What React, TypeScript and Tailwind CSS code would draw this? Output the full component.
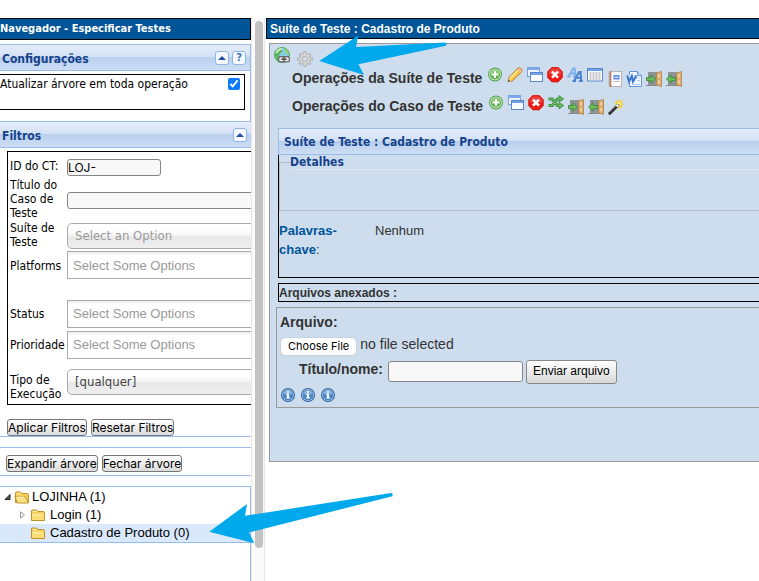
import type { ReactNode } from "react";

type PathProps = { children: ReactNode };

function Icon({ children }: PathProps) {
  return (
    <svg viewBox="0 0 16 16" className="block size-4 shrink-0" aria-hidden="true">
      {children}
    </svg>
  );
}

function AddIcon() {
  return (
    <Icon>
      <circle cx="8" cy="7.5" r="6.9" fill="#4d9e46" />
      <circle cx="8" cy="7.5" r="6" fill="#cfeac4" />
      <circle cx="8" cy="7.5" r="5.1" fill="#62b455" />
      <path d="M3.5 6.5a4.6 4.6 0 0 1 9 0Q8 8 3.5 6.5Z" fill="#8acb7c" />
      <path d="M7 4h2v2.500h2.500v2H9V11H7V8.500H4.500v-2H7Z" fill="#fff" />
    </Icon>
  );
}

function PencilIcon() {
  return (
    <Icon>
      <path d="M1 14.500 2 10.300 11.200 1Q12.500.2 14.200 1.700 15.700 3.400 14.800 4.700L5.200 14Z" fill="#fbc845" stroke="#b9751b" strokeWidth="1" />
      <path d="m3.300 10.700 8-7.700" stroke="#fff0a8" strokeWidth="1.500" />
      <path d="m10.500 2.200 3.300 3.300 1-1q.6-1.200-.8-2.600T11.300 1.400Z" fill="#f2b49a" />
      <path d="M1 14.600 2 11l2.700 2.600Z" fill="#f4dcae" />
      <path d="m1 14.600.5-2 1.500 1.500Z" fill="#333" />
    </Icon>
  );
}

function CopyIcon() {
  return (
    <Icon>
      <rect x=".5" y=".5" width="12" height="9" fill="#edf3fb" stroke="#7aa4de" />
      <rect x="1" y="1" width="11" height="2" fill="#7ba8ea" />
      <rect x="3.500" y="5.500" width="12" height="9" fill="#f7faff" stroke="#5b87c7" />
      <rect x="4" y="6" width="11" height="2" fill="#6fa1ea" />
    </Icon>
  );
}

function DeleteIcon() {
  return (
    <Icon>
      <path d="M4.800.5h6.400l4.100 4.100v6.200l-4.100 4.100H4.800L.7 10.800V4.600Z" fill="#ec1c16" stroke="#d5120d" strokeWidth=".8" />
      <path d="M5 1.500h6l3.200 3.200v2.800H1.800V4.700Z" fill="#f4635a" opacity=".5" />
      <path d="m5 4.700 6 6M11 4.700l-6 6" stroke="#fff" strokeWidth="2.600" />
    </Icon>
  );
}

function FontSortIcon() {
  return (
    <Icon>
      <path d="M1.500 9.500 6.300 1.500h1.500l.5 8M3.500 6.500h4.500M.3 9.500h3M6 9.500h3.300" fill="none" stroke="#7db0ea" strokeWidth="1.900" />
      <path d="m7 14 5-9h1.500l.8 9M9 10.800h5M5.500 14h3.500M12 14h3.800" fill="none" stroke="#4a83d2" strokeWidth="2.100" />
    </Icon>
  );
}

function TableIcon() {
  return (
    <Icon>
      <rect x=".5" y="1.500" width="15" height="12.500" fill="#fbfcfe" stroke="#5b87c7" />
      <rect x="1" y="2" width="14" height="2" fill="#6fa1ea" />
      <path d="M2.500 6h11M2.500 8h11M2.500 10h11M2.500 12h11" stroke="#9a9a9a" strokeDasharray="2 1" />
    </Icon>
  );
}

function NotebookIcon() {
  return (
    <Icon>
      <rect x="2.500" y=".5" width="12" height="15" fill="#fafafa" stroke="#b5b5b5" />
      <path d="M3.500.5v15" stroke="#a9654a" strokeWidth="1.500" />
      <path d="M1 2.500h3M1 5h3M1 7.500h3M1 10h3M1 12.500h3" stroke="#c9a898" />
      <rect x="6.500" y="4" width="6" height="4.500" fill="#5c8ede" />
      <path d="M7.500 6.200h4" stroke="#fff" />
      <path d="M6.500 10.500h6" stroke="#bbb" />
    </Icon>
  );
}

function WordIcon() {
  return (
    <Icon>
      <path d="M3.500.5h8l4 4v11h-12Z" fill="#f3f8ff" stroke="#5e94d8" />
      <path d="M11.500.5v4h4" fill="#c7ddf7" stroke="#5e94d8" />
      <path d="M11 7h3M11 9.500h3M6 13.500h8" stroke="#a9c7ec" />
      <path d="M0 4h11.500L9 11.500H1.500Z" fill="#dbe9fb" />
      <path d="M1.200 4.500 3 10.500 5.800 5l1.200 5.500 3.500-6" fill="none" stroke="#3c78d0" strokeWidth="2.100" />
    </Icon>
  );
}

function DoorIcon({ leaving = false }: { leaving?: boolean }) {
  return (
    <Icon>
      <path d="M2 1h9v13H2Z" fill="#8d9496" />
      <path d="M0 14.500h12" stroke="#8a8a8a" strokeWidth="1" />
      <path d="M10.500 2 15.500.5v15l-5-1.500Z" fill="#dcae72" stroke="#b58145" strokeWidth=".8" />
      <path d="M12 3.500 14 2.900v3.400l-2 .3ZM12 9l2 .2v3.500l-2-.6Z" fill="#efcf9c" />
      {leaving ? (
        <path d="M.5 8 5 4v2.500h4.500v3.200H5v2.500Z" fill="#6cbd5c" stroke="#35852f" strokeWidth=".8" />
      ) : (
        <path d="M9.500 8 5 4v2.500H.5v3.200H5v2.500Z" fill="#6cbd5c" stroke="#35852f" strokeWidth=".8" />
      )}
    </Icon>
  );
}

function ShuffleIcon() {
  return (
    <Icon>
      <path d="M.5 4h3.700l5.300 6.500H12M.5 10.500h3.700L9.500 4H12" fill="none" stroke="#3f8f42" strokeWidth="3.200" />
      <path d="M11 .6 15.700 4 11 7.200ZM11 7.300l4.700 3.200-4.700 3.400Z" fill="#5fb45c" stroke="#3f8f42" strokeWidth=".8" />
      <path d="M1 4h3.300l5.200 6.500H12M1 10.500h3.300L9.500 4H12" fill="none" stroke="#74c16e" strokeWidth="1.200" />
    </Icon>
  );
}

function WandIcon() {
  return (
    <Icon>
      <path d="m10.500 0 1 2.300L14.500 1l-1 2.700L16 5.200l-2.500 1.100 1 3L12 8.200l-1.200 2.500L9.500 8.200 7 8.700l1-2.700L6 4.500l2.500-.8L7.500 1l2.500 1.200Z" fill="#f8c930" />
      <circle cx="11" cy="5" r="2" fill="#fff0a0" />
      <path d="m1.800 14.300 8-8" stroke="#2b2b2b" strokeWidth="3" strokeLinecap="round" />
      <path d="m1.500 13.200 7-7" stroke="#9a9a9a" strokeWidth=".9" />
      <path d="m8.500 7.500 1.800-1.800" stroke="#eee" strokeWidth="2.600" />
    </Icon>
  );
}

function WorldLinkIcon() {
  return (
    <Icon>
      <circle cx="8" cy="8" r="7.500" fill="#86cdea" stroke="#4fa553" />
      <path d="M1 8Q1 2 7 1l1.500 3L5 8l3 3-2 4Q1.500 13 1 8Z" fill="#5db85c" />
      <path d="M10 1.200q5 2 5 6.800l-3-1-1.500-3Z" fill="#8ed27a" />
      <path d="M2.500 6Q4 2 8 2" fill="none" stroke="#e3f8d6" strokeWidth="1.500" />
      <rect x="4" y="9" width="12" height="6.500" rx="2.500" fill="#6b6b6b" />
      <rect x="5.200" y="10.200" width="4.300" height="4" rx="1.500" fill="#e6e6e6" />
      <rect x="10.500" y="10.200" width="4.300" height="4" rx="1.500" fill="#e6e6e6" />
      <path d="M7.500 12.200h5" stroke="#4a4a4a" strokeWidth="1.500" />
    </Icon>
  );
}

function GearIcon() {
  return (
    <Icon>
      <g stroke="#a2a2a2" strokeWidth="3">
        <path d="M8 .3v15.400M.3 8h15.400M2.700 2.700l10.600 10.600M13.300 2.700 2.700 13.300" />
      </g>
      <circle cx="8" cy="8" r="5.700" fill="#a2a2a2" />
      <g stroke="#d6d6d6" strokeWidth="1.700">
        <path d="M8 1v14M1 8h14M3.200 3.200l9.600 9.600M12.800 3.200l-9.600 9.600" />
      </g>
      <circle cx="8" cy="8" r="5" fill="#d6d6d6" />
      <circle cx="8" cy="8" r="3" fill="#b4b4b4" />
      <circle cx="8" cy="8" r="2.100" fill="#cddded" />
    </Icon>
  );
}

function InfoIcon() {
  return (
    <Icon>
      <circle cx="8" cy="8" r="7" fill="#35619f" />
      <circle cx="8" cy="8" r="6" fill="#a9c8ea" />
      <circle cx="8" cy="8" r="5.300" fill="#4b86c8" />
      <path d="M3.500 7a4.600 4.600 0 0 1 9 0Q8 8.500 3.500 7Z" fill="#83b0df" />
      <path d="M7 4h2v1.700H7ZM6.300 6.700H9v3.500h.9v1.300H6.200v-1.300H7V8h-.7Z" fill="#fff" />
    </Icon>
  );
}

function FolderIcon({ open = false }: { open?: boolean }) {
  return (
    <Icon>
      <path d="M1.500 13.500V4q0-1 1-1h4l1.500 1.500h5.500q1 0 1 1v8Z" fill="#f5cf5a" stroke="#c0902a" />
      {open ? (
        <path d="M.8 7.500h10.400l3.300 6.500H3.500Z" fill="#fbe287" stroke="#c0902a" />
      ) : (
        <path d="M2 6.500h12V13H2Z" fill="#fbdd78" />
      )}
      <path d="M3 4.500h3.500M2.500 8h8" stroke="#fff3ba" />
    </Icon>
  );
}

const toolButton =
  "flex size-[14px] items-center justify-center rounded-[3px] border border-[#8fb5e8] bg-[#f5f9ff] text-[11px] leading-none font-bold text-[#3a72b5]";

function CollapseButton({ label }: { label: string }) {
  return (
    <button type="button" aria-label={label} className={toolButton}>
      <svg viewBox="0 0 8 4" className="h-1 w-2" aria-hidden="true">
        <path d="M0 4 4 0l4 4Z" fill="#1e4ea5" />
      </svg>
    </button>
  );
}

const barGradient =
  "bg-[linear-gradient(#e4edf9_0,#d3e1f4_48%,#b9cfee_50%,#cddef5_100%)] font-['DejaVu_Sans_Condensed',sans-serif] text-[12px] font-bold text-[#15428b]";

function SectionBar({ title, children }: { title: string; children: ReactNode }) {
  return (
    <div className={"flex h-[27px] items-center border-y border-[#99bbe8] pr-1 pl-0.5 " + barGradient}>
      <h2 className="flex-1 pt-0.5">{title}</h2>
      <div className="flex gap-[3px]">{children}</div>
    </div>
  );
}

const smallButton =
  "h-[17px] rounded-[3px] border border-[#777] bg-linear-to-b from-white to-[#dcdcdc] font-['Inter',sans-serif] text-[12px] leading-[15px] whitespace-nowrap text-black";
const textBox = "rounded-[3px] border border-[#858585] bg-[#f8f8f8] font-['Inter',sans-serif] text-[12px] text-black outline-none";
const multiSelect =
  "block h-7 w-[220px] border border-[#aaa] bg-linear-to-b from-[#eee] to-white to-15% px-[5px] font-['Liberation_Sans',Arial,sans-serif] text-[13px] outline-none placeholder:text-[#999]";
const singleSelect =
  "block h-[26px] w-[220px] appearance-none rounded-[5px] border border-[#aaa] bg-[linear-gradient(#fff_20%,#f4f4f4_50%,#e9e9e9_52%,#eee_100%)] px-[7px] text-[13px]";

function Navigator() {
  return (
    <aside className="flex w-[251px] shrink-0 flex-col overflow-hidden font-['DejaVu_Sans_Condensed',sans-serif] text-[12px] leading-[14px] text-black">
      <h1 className="h-[22px] border-y border-r border-black bg-[#005498] text-[11px] leading-[20px] font-bold text-white">
        Navegador - Especificar Testes
      </h1>

      <div className="mt-1 h-[77px] border-r border-[#99bbe8]">
        <SectionBar title="Configurações">
          <CollapseButton label="Recolher configurações" />
          <button type="button" aria-label="Ajuda" className={toolButton}>?</button>
        </SectionBar>
        <label className="mt-[3px] mr-[5px] flex h-9 justify-between border-y border-r border-black pt-[3px] pr-1">
          <span className="leading-[13px]">Atualizar árvore em toda operação</span>
          <input type="checkbox" defaultChecked className="size-3 accent-[#0a7aff]" />
        </label>
      </div>

      <div className="border-b border-[#99bbe8]">
        <SectionBar title="Filtros">
          <CollapseButton label="Recolher filtros" />
        </SectionBar>
        <form>
          <div className="mt-[3px] ml-[7px] w-[300px] border border-black pt-[3px]">
            <div className="flex h-6 items-center">
              <label htmlFor="ct" className="w-[59px] shrink-0 pb-[3px] pl-0.5">ID do CT:</label>
              <input id="ct" defaultValue="LOJ-" className={"h-[17px] w-[94px] " + textBox} />
            </div>
            <div className="flex h-[42px] items-center">
              <label htmlFor="titulo" className="w-[59px] shrink-0 pr-1 pb-[3px] pl-0.5">Título do Caso de Teste</label>
              <input id="titulo" className={"h-[17px] w-[220px] " + textBox} />
            </div>
            <div className="flex h-[30px] items-center">
              <label htmlFor="suite" className="w-[59px] shrink-0 pr-2 pb-[3px] pl-0.5">Suíte de Teste</label>
              <select id="suite" className={singleSelect + " text-[#999]"}>
                <option>Select an Option</option>
              </select>
            </div>
            <div className="flex h-[47px] items-start">
              <label htmlFor="plataformas" className="w-[59px] shrink-0 pt-2 pl-0.5">Platforms</label>
              <input id="plataformas" placeholder="Select Some Options" className={multiSelect} />
            </div>
            <div className="flex h-[31px] items-center">
              <label htmlFor="status" className="w-[59px] shrink-0 pl-0.5">Status</label>
              <input id="status" placeholder="Select Some Options" className={multiSelect} />
            </div>
            <div className="flex h-[31px] items-center">
              <label htmlFor="prioridade" className="w-[59px] shrink-0 pl-0.5">Prioridade</label>
              <input id="prioridade" placeholder="Select Some Options" className={multiSelect} />
            </div>
            <div className="flex h-11 items-end pb-[9px]">
              <label htmlFor="tipo" className="-mb-2 w-[59px] shrink-0 pr-2 pb-0.5 pl-0.5">Tipo de Execução</label>
              <select id="tipo" className={singleSelect + " text-[#444]"}>
                <option>[qualquer]</option>
              </select>
            </div>
          </div>
          <div className="flex gap-1 pt-[14px] pl-[7px]">
            <button type="button" className={smallButton}>Aplicar Filtros</button>
            <button type="button" className={smallButton}>Resetar Filtros</button>
          </div>
        </form>
      </div>

      <div className="mt-[10px] flex gap-1 border-y border-[#99bbe8] pt-[7px] pb-[3px] pl-[6px]">
        <button type="button" className={smallButton}>Expandir árvore</button>
        <button type="button" className={smallButton}>Fechar árvore</button>
      </div>

      <ul className="mt-[10px] flex-1 border-t border-r border-[#99bbe8] pt-px font-['Liberation_Sans',Arial,sans-serif] text-[13px] leading-[18px]">
        <li className="flex h-[18px] items-center pl-1">
          <svg viewBox="0 0 8 8" className="mr-[2px] size-2" aria-hidden="true">
            <path d="M1 6.500 6 1.500v5Z" fill="#555" stroke="#222" />
          </svg>
          <FolderIcon open />
          <span className="pl-0.5">LOJINHA (1)</span>
        </li>
        <li className="flex h-[18px] items-center pl-[19px]">
          <svg viewBox="0 0 8 8" className="mr-[3px] size-2" aria-hidden="true">
            <path d="M1.500.8 5.500 4l-4 3.200Z" fill="#fff" stroke="#999" />
          </svg>
          <FolderIcon />
          <span className="pl-1">Login (1)</span>
        </li>
        <li className="flex h-[19px] items-center border-b border-[#99bbe8] bg-[#d9e8fb] pl-[30px]">
          <FolderIcon />
          <span className="pl-1">Cadastro de Produto (0)</span>
        </li>
      </ul>
    </aside>
  );
}

function SuitePanel() {
  return (
    <main className="min-w-0 flex-1 font-['Liberation_Sans',Arial,sans-serif] text-[13px] text-[#333]">
      <h1 className="h-[21px] border-y border-l border-black bg-[#005498] pl-[3px] text-[12px] leading-[20px] font-bold text-white">
        Suíte de Teste : Cadastro de Produto
      </h1>
      <div className="mt-1 ml-[3px] h-[419px] border-y border-l border-[#999] bg-[#cddded] pt-[3px]">
        <div className="flex h-5 gap-[7px] pl-[4px]">
          <a href="#link" aria-label="Link direto"><WorldLinkIcon /></a>
          <button type="button" aria-label="Ações" className="pt-[3px]"><GearIcon /></button>
        </div>

        <div className="flex h-7 pl-[22px] text-[14px] leading-[22px] font-bold whitespace-nowrap">
          <h2 className="w-[195px] shrink-0">Operações da Suíte de Teste</h2>
          <div className="flex gap-1">
            <AddIcon />
            <PencilIcon />
            <CopyIcon />
            <DeleteIcon />
            <FontSortIcon />
            <TableIcon />
          </div>
          <div className="flex gap-[3px] pt-1 pl-1">
            <NotebookIcon />
            <WordIcon />
            <div className="flex gap-1 pl-px">
              <DoorIcon />
              <DoorIcon leaving />
            </div>
          </div>
        </div>
        <div className="flex h-[33px] pl-[22px] text-[14px] leading-[22px] font-bold whitespace-nowrap">
          <h2 className="w-[196px] shrink-0">Operações do Caso de Teste</h2>
          <div className="flex gap-1">
            <AddIcon />
            <CopyIcon />
            <DeleteIcon />
            <ShuffleIcon />
          </div>
          <div className="flex gap-1 pt-1 pl-1">
            <DoorIcon />
            <DoorIcon leaving />
            <WandIcon />
          </div>
        </div>

        <section className="ml-2">
          <h3 className={"h-[27px] border-y border-l border-[#99bbe8] pl-[5px] leading-[27px] " + barGradient}>
            Suíte de Teste : Cadastro de Produto
          </h3>
          <div className="h-[123px] border-b border-l border-black">
            <fieldset className="h-14 border-y border-l border-[#b5b8c8] pl-[10px]">
              <legend className="w-full border-b border-[#dde6ee] font-['DejaVu_Sans_Condensed',sans-serif] text-[12px] leading-[14px] font-bold text-[#15428b]">
                Detalhes
              </legend>
            </fieldset>
            <dl className="flex pt-[10px] leading-[19px]">
              <dt className="w-24 pr-4">
                <b className="text-[#005498]">Palavras-chave</b>:
              </dt>
              <dd>Nenhum</dd>
            </dl>
          </div>
        </section>

        <h3 className="mt-[5px] ml-2 h-[19px] border-y border-l border-black text-[12px] leading-[18px] font-bold">
          Arquivos anexados :
        </h3>

        <form className="mt-[5px] ml-[6px] h-[101px] border-y border-l border-[#999] pt-1 pl-[3px]">
          <h3 className="text-[14px] leading-5 font-bold">Arquivo:</h3>
          <label className="mt-[3px] flex h-6 items-start gap-1">
            <input type="file" className="sr-only" />
            <span className="mt-[3px] ml-px rounded-[4px] bg-white px-[7px] font-['Inter',sans-serif] text-[11px] leading-[17px] text-black shadow-[0_0_1px_#888]">
              Choose File
            </span>
            <span className="text-[14px] leading-[18px]">no file selected</span>
          </label>
          <div className="flex h-[25px] items-center pl-[19px]">
            <label htmlFor="nome" className="w-[89px] pb-1 text-[14px] font-bold">Título/nome:</label>
            <input id="nome" className={"h-[21px] w-[135px] " + textBox} />
            <button
              type="submit"
              className="ml-[3px] h-6 rounded-[3px] border border-[#888] bg-linear-to-b from-white to-[#d8d8d8] px-[6px] pb-0.5 text-[12px] whitespace-nowrap text-black"
            >
              Enviar arquivo
            </button>
          </div>
          <div className="flex gap-1 pt-[3px]">
            <InfoIcon />
            <InfoIcon />
            <InfoIcon />
          </div>
        </form>
      </div>
    </main>
  );
}

function Pointers() {
  return (
    <svg viewBox="0 0 759 581" width="759" height="581" className="pointer-events-none absolute top-0 left-0" aria-hidden="true">
      <g fill="#00a8ec">
        <path d="M319.300 61 358.300 35.500 356 47 445 42.500q2.500 1 1 3.300L358.500 64.300 364 75Z" />
        <path d="M209.300 531.700 247 504l-2 11.800L391 493q2.500 0 1.300 3.300L249 532.500l5.300 10.800Z" />
      </g>
    </svg>
  );
}

export default function App() {
  return (
    <div className="relative min-h-screen overflow-hidden bg-white pt-[18px]">
      <div className="flex min-h-[563px]">
        <Navigator />
        <div className="mr-px w-[14px] shrink-0 border-x border-[#e8e8e8] bg-[#fafafa] px-[3px] pt-[3px]">
          <div className="h-[527px] w-2 rounded-full bg-[#c2c2c2]" />
        </div>
        <SuitePanel />
      </div>
      <Pointers />
    </div>
  );
}
